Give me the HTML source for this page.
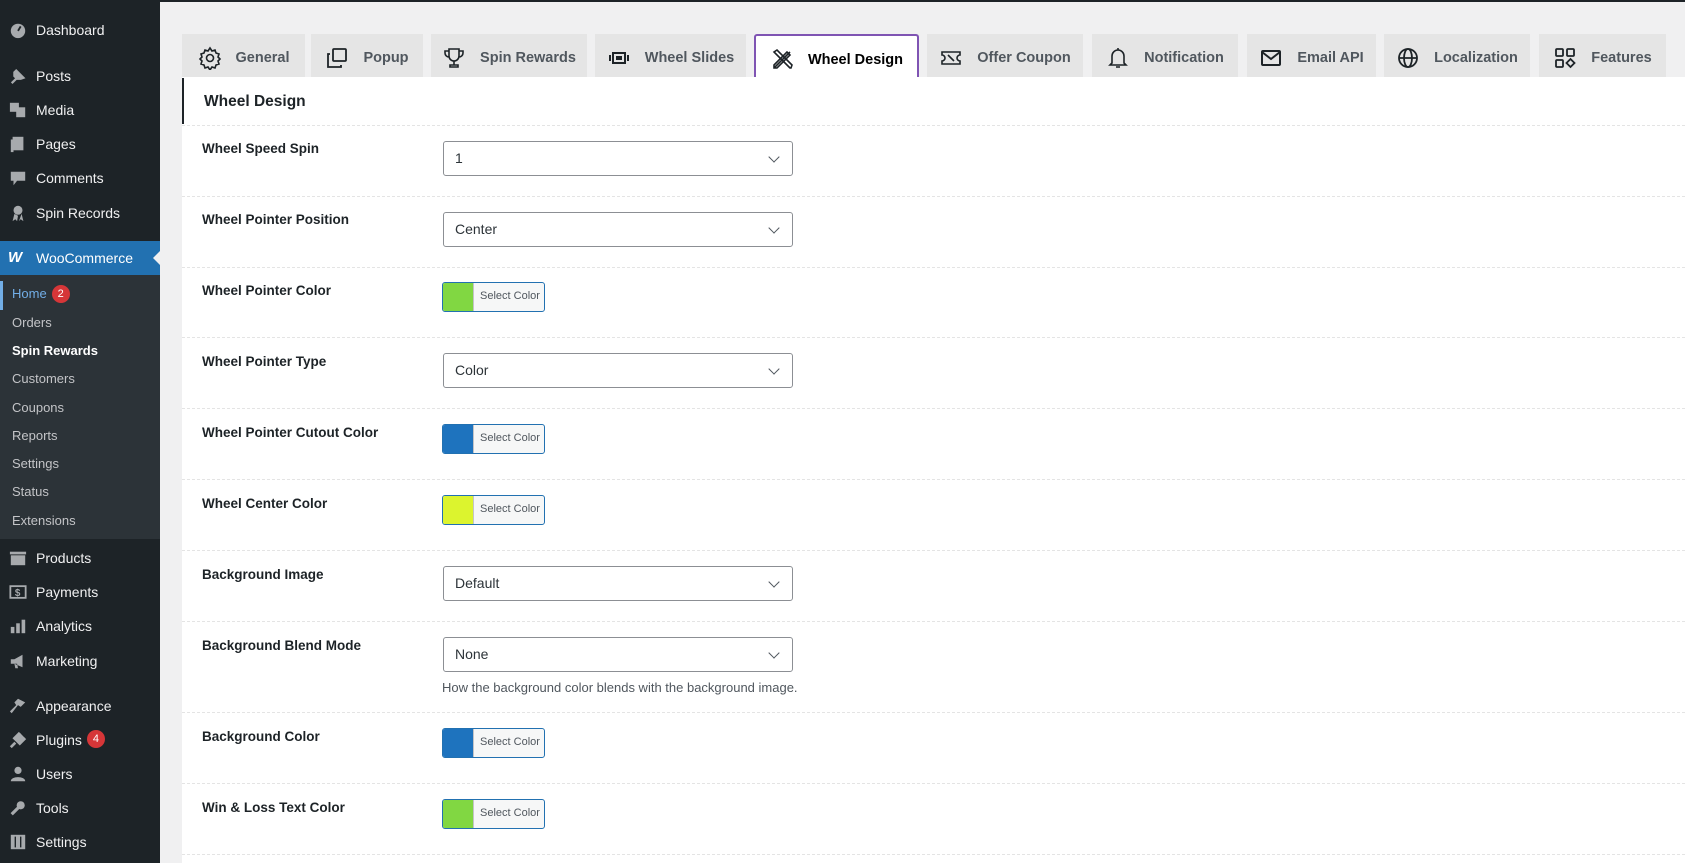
<!DOCTYPE html>
<html><head><meta charset="utf-8"><style>
*{box-sizing:border-box;margin:0;padding:0}
body{width:1685px;height:863px;overflow:hidden;background:#f0f0f1;font-family:"Liberation Sans",sans-serif;position:relative}
.abs{position:absolute}
#top{left:0;top:0;width:1685px;height:2px;background:#1d2327}
#side{left:0;top:0;width:160px;height:863px;background:#1d2327}
.mi{position:absolute;left:0;width:160px;color:#f0f0f1;font-size:14px;line-height:20px;padding-left:36px}
.mi .ic{position:absolute;left:9px;top:1px;width:18px;height:18px}
.sub{position:absolute;left:0;width:160px;color:#c3c4c7;font-size:13px;line-height:18px;padding-left:12px}
.badge{display:inline-block;background:#d63638;color:#fff;border-radius:9px;font-size:11px;line-height:18px;min-width:18px;text-align:center;margin-left:5px;vertical-align:top}
.tab{position:absolute;top:34px;height:43px;padding-top:4px;background:#e5e5e5;color:#50575e;font-size:14.5px;font-weight:bold;display:flex;align-items:center;justify-content:center;gap:14px}
.tab svg{width:24px;height:24px;fill:none;stroke:#1d2327;stroke-width:1.6}
#panel{left:182px;top:77px;width:1503px;height:786px;background:#fff}
.sep{position:absolute;left:182px;width:1503px;border-top:1px dashed #e4e4e4}
.lbl{position:absolute;left:202px;font-size:13.5px;font-weight:bold;color:#1d2327}
.sel{position:absolute;left:443px;width:350px;height:35px;border:1px solid #8c8f94;border-radius:3px;font-size:14px;color:#2c3338;padding-left:11px;line-height:33px;background:#fff}
.sel:after{content:"";position:absolute;right:14px;top:11px;width:7px;height:7px;border-right:1.6px solid #50575e;border-bottom:1.6px solid #50575e;transform:rotate(45deg)}
.cb{position:absolute;left:442px;width:103px;height:30px;border:1px solid #2271b1;border-radius:3px;background:#f6f7f7;overflow:hidden}
.cb i{position:absolute;left:0;top:0;width:31px;height:100%;border-right:1px solid #c3c4c7}
.cb span{position:absolute;left:37px;top:7px;font-size:11px;color:#50575e}
</style></head><body>
<div id="side" class="abs"></div>
<div id="top" class="abs"></div>

<div class="mi" style="top:20px"><svg class="ic" viewBox="0 0 20 20"><circle cx="10" cy="11" r="8" fill="#a7aaad"/><path d="M10 11l3-5" stroke="#1d2327" stroke-width="2"/></svg>Dashboard</div>
<div class="mi" style="top:66px"><svg class="ic" viewBox="0 0 20 20"><path d="M3 18l6-6M8 4l8 8-3 1-4 0-3-3 0-4z" stroke="#a7aaad" stroke-width="2.5" fill="#a7aaad"/></svg>Posts</div>
<div class="mi" style="top:100px"><svg class="ic" viewBox="0 0 20 20"><rect x="1" y="2" width="10" height="10" fill="#a7aaad"/><rect x="8" y="7" width="10" height="11" fill="#a7aaad"/></svg>Media</div>
<div class="mi" style="top:134px"><svg class="ic" viewBox="0 0 20 20"><rect x="4" y="2" width="12" height="15" fill="#a7aaad"/><rect x="2" y="5" width="3" height="14" fill="#a7aaad"/></svg>Pages</div>
<div class="mi" style="top:168px"><svg class="ic" viewBox="0 0 20 20"><path d="M2 3h16v10h-9l-4 5v-5h-3z" fill="#a7aaad"/></svg>Comments</div>
<div class="mi" style="top:203px"><svg class="ic" viewBox="0 0 20 20"><circle cx="10" cy="7" r="5" fill="#a7aaad"/><path d="M6 11l-2 8 3-2 2 2 1-6M14 11l2 8-3-2-2 2" fill="#a7aaad"/></svg>Spin Records</div>
<div class="abs" style="left:0;top:241px;width:160px;height:34px;background:#2271b1"></div>
<div class="abs" style="left:153px;top:251px;width:0;height:0;border-top:7px solid transparent;border-bottom:7px solid transparent;border-right:7px solid #f0f0f1"></div>
<div class="mi" style="top:248px;color:#fff"><span class="ic" style="font-weight:900;font-style:italic;font-size:15px;top:0;left:8px;color:#fff">W</span>WooCommerce</div>
<div class="abs" style="left:0;top:275px;width:160px;height:264px;background:#2c3338"></div>
<div class="abs" style="left:0;top:281px;width:3px;height:29px;background:#72aee6"></div>
<div class="sub" style="top:285px;color:#72aee6">Home<span class="badge">2</span></div>
<div class="sub" style="top:314px">Orders</div>
<div class="sub" style="top:342px;color:#fff;font-weight:bold">Spin Rewards</div>
<div class="sub" style="top:370px">Customers</div>
<div class="sub" style="top:399px">Coupons</div>
<div class="sub" style="top:427px">Reports</div>
<div class="sub" style="top:455px">Settings</div>
<div class="sub" style="top:483px">Status</div>
<div class="sub" style="top:512px">Extensions</div>
<div class="mi" style="top:548px"><svg class="ic" viewBox="0 0 20 20"><rect x="1" y="3" width="18" height="3" fill="#a7aaad"/><rect x="2" y="7" width="16" height="11" fill="#a7aaad"/></svg>Products</div>
<div class="mi" style="top:582px"><svg class="ic" viewBox="0 0 20 20"><rect x="1.5" y="3.5" width="17" height="13" stroke="#a7aaad" stroke-width="2" fill="none"/><text x="6.5" y="14.5" font-size="11" fill="#a7aaad" font-weight="bold">$</text></svg>Payments</div>
<div class="mi" style="top:616px"><svg class="ic" viewBox="0 0 20 20"><rect x="2" y="11" width="4" height="7" fill="#a7aaad"/><rect x="8" y="7" width="4" height="11" fill="#a7aaad"/><rect x="14" y="3" width="4" height="15" fill="#a7aaad"/></svg>Analytics</div>
<div class="mi" style="top:651px"><svg class="ic" viewBox="0 0 20 20"><path d="M2 8h4l9-5v14l-9-4h-4zM6 13l1 5h3l-1-5" fill="#a7aaad"/></svg>Marketing</div>
<div class="mi" style="top:696px"><svg class="ic" viewBox="0 0 20 20"><path d="M10 2l8 4-5 5-3-2-7 9-2-2 7-7-2-3z" fill="#a7aaad"/></svg>Appearance</div>
<div class="mi" style="top:730px"><svg class="ic" viewBox="0 0 20 20"><path d="M12 2l-6 6 6 6 6-6M2 18l5-5" stroke="#a7aaad" stroke-width="3" fill="#a7aaad"/></svg>Plugins<span class="badge">4</span></div>
<div class="mi" style="top:764px"><svg class="ic" viewBox="0 0 20 20"><circle cx="10" cy="6" r="4" fill="#a7aaad"/><path d="M2 18c0-6 16-6 16 0z" fill="#a7aaad"/></svg>Users</div>
<div class="mi" style="top:798px"><svg class="ic" viewBox="0 0 20 20"><path d="M3 17l8-8" stroke="#a7aaad" stroke-width="3.5"/><circle cx="13" cy="7" r="4.5" fill="#a7aaad"/></svg>Tools</div>
<div class="mi" style="top:832px"><svg class="ic" viewBox="0 0 20 20"><rect x="2" y="2" width="16" height="16" fill="#a7aaad"/><path d="M7 4v12M13 4v12" stroke="#1d2327" stroke-width="1.5"/></svg>Settings</div>

<div class="tab" style="left:182px;width:123px"><svg viewBox="0 0 24 24"><circle cx="12" cy="12" r="3.5"/><path d="M12 2l2 3 3-1 1 3 3 1-1 3 2 2-2 2 1 3-3 1-1 3-3-1-2 3-2-3-3 1-1-3-3-1 1-3-2-2 2-2-1-3 3-1 1-3 3 1z"/></svg>General</div>
<div class="tab" style="left:311px;width:112px"><svg viewBox="0 0 24 24" style="stroke-width:1.8"><rect x="8" y="3" width="13" height="12" rx="1"/><path d="M5 8H3v13h13v-2"/></svg>Popup</div>
<div class="tab" style="left:431px;width:156px"><svg viewBox="0 0 24 24"><path d="M7 3h10v7a5 5 0 01-10 0zM7 5H3v2a4 4 0 004 4M17 5h4v2a4 4 0 01-4 4M12 15v4M8 21h8v-2H8z"/></svg>Spin Rewards</div>
<div class="tab" style="left:595px;width:151px"><svg viewBox="0 0 24 24"><rect x="6" y="7" width="12" height="10" stroke-width="2"/><path d="M9 11h6M9 13h6M3 9v6M21 9v6" stroke-width="2"/></svg>Wheel Slides</div>
<div class="tab" style="left:754px;top:34px;width:165px;height:45px;background:#fff;border:2px solid #7f54b3;border-bottom:none;border-radius:3px 3px 0 0;color:#000"><svg viewBox="0 0 24 24"><path d="M4 20l16-16M4 20l3 0 13-13-3-3L4 17z"/><path d="M20 20L4 4l3-2 15 15-1 3z"/></svg>Wheel Design</div>
<div class="tab" style="left:927px;width:156px"><svg viewBox="0 0 24 24"><path d="M3 6h18v3a3 3 0 000 6v3H3v-3a3 3 0 000-6z"/><path d="M9 9l6 6M9.5 14.5h0M14.5 9.5h0"/></svg>Offer Coupon</div>
<div class="tab" style="left:1092px;width:146px"><svg viewBox="0 0 24 24"><path d="M6 17V10a6 6 0 0112 0v7l2 2H4zM10 21h4M12 2v2"/></svg>Notification</div>
<div class="tab" style="left:1247px;width:129px"><svg viewBox="0 0 24 24" style="stroke-width:2"><rect x="3" y="5" width="18" height="14" rx="1"/><path d="M3 6l9 7 9-7"/></svg>Email API</div>
<div class="tab" style="left:1384px;width:146px"><svg viewBox="0 0 24 24" style="stroke-width:1.8"><circle cx="12" cy="12" r="9"/><ellipse cx="12" cy="12" rx="4" ry="9"/><path d="M3 12h18"/></svg>Localization</div>
<div class="tab" style="left:1539px;width:127px"><svg viewBox="0 0 24 24" style="stroke-width:1.8"><rect x="3" y="3" width="7" height="7" rx="1"/><rect x="14" y="3" width="7" height="7" rx="1"/><rect x="3" y="14" width="7" height="7" rx="1"/><path d="M17.5 13l4 4-4 4-4-4z"/></svg>Features</div>

<div id="panel" class="abs"></div>
<div class="abs" style="left:182px;top:78px;width:2px;height:46px;background:#1d2327"></div>
<div class="abs" style="left:204px;top:93px;font-size:15.5px;font-weight:bold;color:#1d2327">Wheel Design</div>

<div class="sep" style="top:125px"></div>
<div class="lbl" style="top:141px">Wheel Speed Spin</div>
<div class="sel" style="top:141px">1</div>
<div class="sep" style="top:196px"></div>
<div class="lbl" style="top:212px">Wheel Pointer Position</div>
<div class="sel" style="top:212px">Center</div>
<div class="sep" style="top:267px"></div>
<div class="lbl" style="top:283px">Wheel Pointer Color</div>
<div class="cb" style="top:282px"><i style="background:#81d742"></i><span>Select Color</span></div>
<div class="sep" style="top:337px"></div>
<div class="lbl" style="top:354px">Wheel Pointer Type</div>
<div class="sel" style="top:353px">Color</div>
<div class="sep" style="top:408px"></div>
<div class="lbl" style="top:425px">Wheel Pointer Cutout Color</div>
<div class="cb" style="top:424px"><i style="background:#1e73be"></i><span>Select Color</span></div>
<div class="sep" style="top:479px"></div>
<div class="lbl" style="top:496px">Wheel Center Color</div>
<div class="cb" style="top:495px"><i style="background:#dcf42e"></i><span>Select Color</span></div>
<div class="sep" style="top:550px"></div>
<div class="lbl" style="top:567px">Background Image</div>
<div class="sel" style="top:566px">Default</div>
<div class="sep" style="top:621px"></div>
<div class="lbl" style="top:638px">Background Blend Mode</div>
<div class="sel" style="top:637px">None</div>
<div class="abs" style="left:442px;top:680px;font-size:13px;color:#50575e">How the background color blends with the background image.</div>
<div class="sep" style="top:712px"></div>
<div class="lbl" style="top:729px">Background Color</div>
<div class="cb" style="top:728px"><i style="background:#1e73be"></i><span>Select Color</span></div>
<div class="sep" style="top:783px"></div>
<div class="lbl" style="top:800px">Win &amp; Loss Text Color</div>
<div class="cb" style="top:799px"><i style="background:#81d742"></i><span>Select Color</span></div>
<div class="sep" style="top:854px"></div>
</body></html>
